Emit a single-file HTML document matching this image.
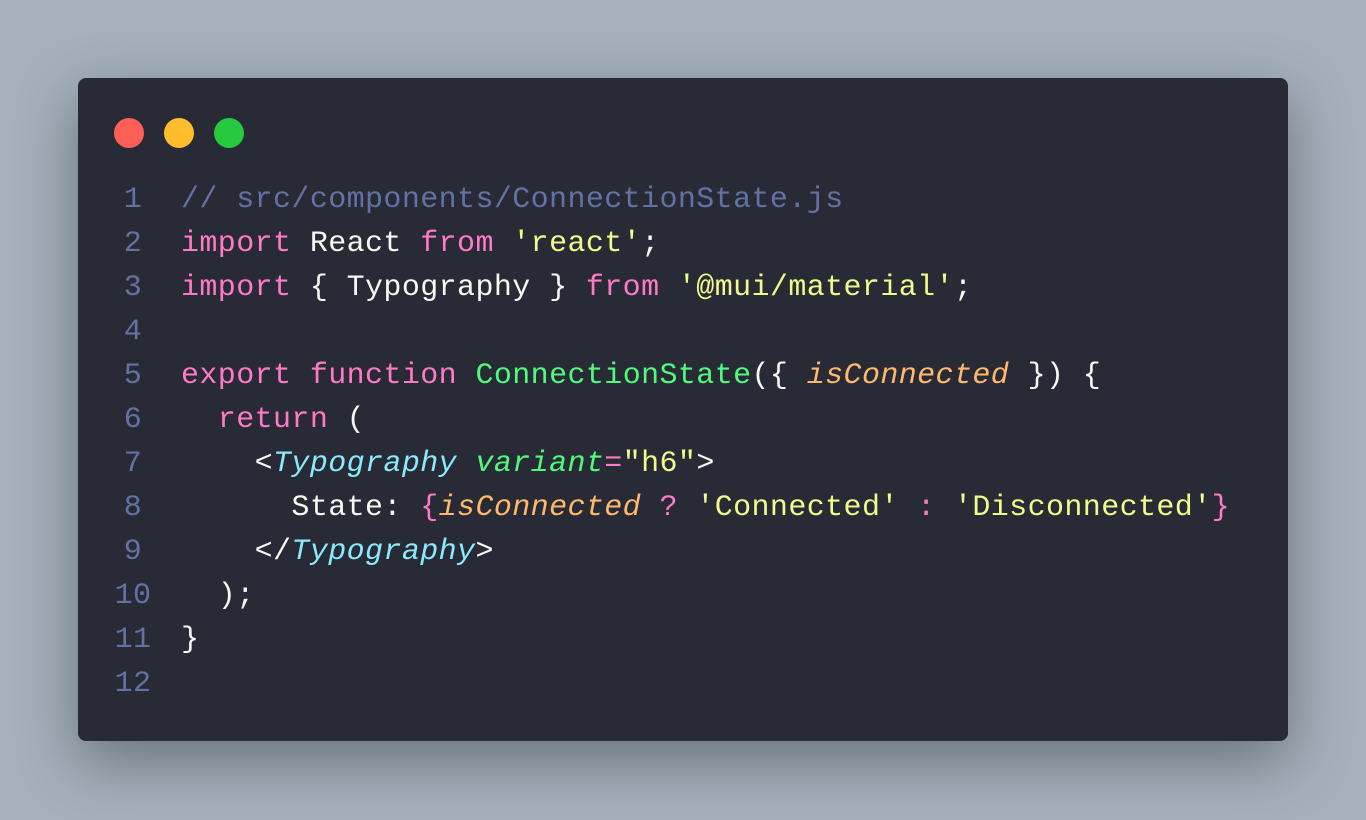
<!DOCTYPE html>
<html><head><meta charset="utf-8"><style>
html,body{margin:0;padding:0;width:1366px;height:820px;overflow:hidden;background:#a4b0bc;}
.win{position:absolute;left:78px;top:78px;width:1210px;height:663px;background:#282a36;border-radius:8px;box-shadow:0 20px 60px rgba(0,0,0,0.35);}
.dot{position:absolute;top:40px;width:30px;height:30px;border-radius:50%;}
.code{position:absolute;left:0;top:100px;font-family:"Liberation Mono",monospace;font-size:30px;letter-spacing:0.4px;line-height:44px;color:#f8f8f2;white-space:pre;}
.ln{position:absolute;left:36px;width:38px;text-align:center;color:#6272a4;}
.tx{position:absolute;left:103px;}
.c{color:#6272a4}.k{color:#ff79c6}.s{color:#f1fa8c}.f{color:#50fa7b}.p{color:#ffb86c;font-style:italic}.t{color:#8be9fd;font-style:italic}.a{color:#50fa7b;font-style:italic}
</style></head><body>
<div class="win">
<div class="dot" style="left:36px;background:#ff5f56"></div>
<div class="dot" style="left:86px;background:#ffbd2e"></div>
<div class="dot" style="left:136px;background:#27c93f"></div>
<div class="code">
<div class="ln" style="top:0">1</div><div class="tx" style="top:0"><span class="c">// src/components/ConnectionState.js</span></div>
<div class="ln" style="top:44px">2</div><div class="tx" style="top:44px"><span class="k">import</span> React <span class="k">from</span> <span class="s">'react'</span>;</div>
<div class="ln" style="top:88px">3</div><div class="tx" style="top:88px"><span class="k">import</span> { Typography } <span class="k">from</span> <span class="s">'@mui/material'</span>;</div>
<div class="ln" style="top:132px">4</div>
<div class="ln" style="top:176px">5</div><div class="tx" style="top:176px"><span class="k">export</span> <span class="k">function</span> <span class="f">ConnectionState</span>({ <span class="p">isConnected</span> }) {</div>
<div class="ln" style="top:220px">6</div><div class="tx" style="top:220px">  <span class="k">return</span> (</div>
<div class="ln" style="top:264px">7</div><div class="tx" style="top:264px">    &lt;<span class="t">Typography</span> <span class="a">variant</span><span class="k">=</span><span class="s">"h6"</span>&gt;</div>
<div class="ln" style="top:308px">8</div><div class="tx" style="top:308px">      State: <span class="k">{</span><span class="p">isConnected</span> <span class="k">?</span> <span class="s">'Connected'</span> <span class="k">:</span> <span class="s">'Disconnected'</span><span class="k">}</span></div>
<div class="ln" style="top:352px">9</div><div class="tx" style="top:352px">    &lt;/<span class="t">Typography</span>&gt;</div>
<div class="ln" style="top:396px">10</div><div class="tx" style="top:396px">  );</div>
<div class="ln" style="top:440px">11</div><div class="tx" style="top:440px">}</div>
<div class="ln" style="top:484px">12</div>
</div>
</div>
</body></html>
